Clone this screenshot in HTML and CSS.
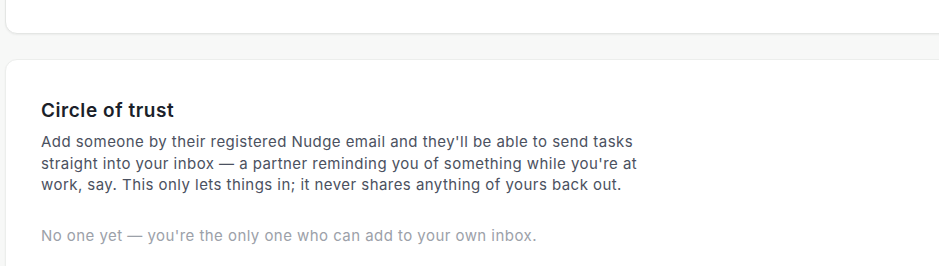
FILE: index.html
```html
<!DOCTYPE html>
<html lang="en">
<head>
<meta charset="utf-8">
<title>Circle of trust</title>
<link rel="stylesheet" href="styles.css">
</head>
<body>
<main class="page">
  <section class="card card-prev"></section>
  <section class="card">
    <h2 class="card-title">Circle of trust</h2>
    <p class="card-desc">Add someone by their registered Nudge email and they'll be able to send tasks straight into your inbox — a partner reminding you of something while you're at work, say. This only lets things in; it never shares anything of yours back out.</p>
    <p class="card-empty">No one yet — you're the only one who can add to your own inbox.</p>
  </section>
</main>
</body>
</html>
```
FILE: styles.css
```css
html, body {
  margin: 0;
  padding: 0;
  background: #f7f8f7;
  overflow: hidden;
}
body {
  font-family: Inter, "Noto Sans", sans-serif;
  width: 939px;
  height: 266px;
}
.page {
  display: flex;
  flex-direction: column;
  gap: 25px;
  padding-left: 5px;
  margin-right: -30px;
}
.card {
  box-sizing: border-box;
  background: #ffffff;
  border: 1px solid #eceeec;
  border-radius: 12px;
  box-shadow: 0 1px 2px rgba(0, 0, 0, 0.05);
  padding: 39px 35px 30px;
}
.card-prev {
  height: 60px;
  margin-top: -26px;
  padding: 0;
  border-color: #e4e6e4;
}
.card-title {
  margin: 0 0 8px;
  font-size: 19px;
  font-weight: 600;
  letter-spacing: 0.55px;
  color: #1b1f2a;
  line-height: 24px;
}
.card-desc {
  margin: 0;
  max-width: 610px;
  font-size: 15px;
  letter-spacing: 0.45px;
  line-height: 21.5px;
  color: #4b5160;
}
.card-empty {
  margin: 29px 0 0;
  font-size: 15px;
  letter-spacing: 0.45px;
  line-height: 22px;
  color: #9ca1a9;
}
```
